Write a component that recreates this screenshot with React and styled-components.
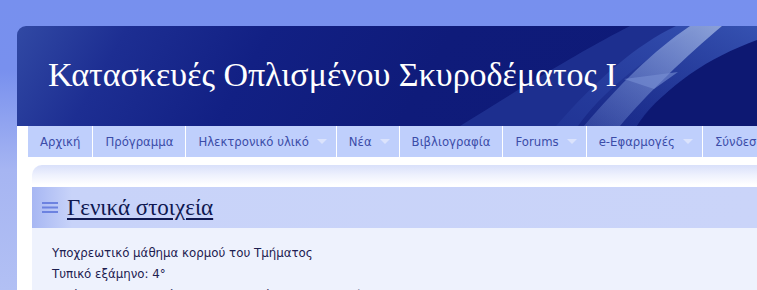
import React from 'react';
import styled, { createGlobalStyle } from 'styled-components';

const GlobalStyle = createGlobalStyle`
  html, body {
    margin: 0;
    padding: 0;
  }
  body {
    width: 757px;
    height: 290px;
    overflow: hidden;
    background: linear-gradient(180deg, #7790ee 0px, #7890ee 70px, #a6b5f2 170px, #b2c0f4 290px);
  }
`;

const Page = styled.div`
  margin: 26px 0 0 17px;
  width: 740px;
  height: 264px;
  overflow: hidden;
`;

const Header = styled.header`
  position: relative;
  height: 100px;
  border-radius: 9px 0 0 0;
  overflow: hidden;
  background: linear-gradient(120deg, #3149a4 0%, #1d2e92 14%, #122084 32%, #0f1b7a 55%, #0e1a76 100%);
`;

const Swoosh = styled.svg`
  position: absolute;
  inset: 0;
  width: 740px;
  height: 100px;
`;

const Title = styled.h1`
  position: relative;
  margin: 0;
  padding: 29px 0 0 31px;
  font-family: "Liberation Serif", "DejaVu Serif", serif;
  font-weight: normal;
  font-size: 34px;
  line-height: 40px;
  color: #ffffff;
  white-space: nowrap;
`;

const Body = styled.div`
  background: #ffffff;
  padding: 0 0 0 11px;
  box-shadow: -5px 0 3px -1px rgba(226, 232, 253, 0.8);
`;

const Nav = styled.nav`
  display: flex;
  height: 31px;
  background: #bfcffc;
  white-space: nowrap;
  overflow: hidden;
`;

const NavItem = styled.div`
  display: flex;
  align-items: center;
  flex: none;
  padding: 0 ${({ $drop }) => ($drop ? '9px' : '12px')} 0 12px;
  border-right: 1px solid #ffffff;
  font-family: "DejaVu Sans", Verdana, sans-serif;
  font-size: 11.7px;
  color: #3b4ca8;
`;

const Arrow = styled.span`
  margin-left: 8px;
  width: 0;
  height: 0;
  border-left: 5px solid transparent;
  border-right: 5px solid transparent;
  border-top: 5px solid #dbe3fc;
`;

const Block = styled.section`
  margin: 8px 0 0 4px;
  border-radius: 10px 0 0 0;
  background: linear-gradient(180deg, #d9e0fa 0px, #eef1fd 10px, #ffffff 20px);
  padding-top: 22px;
`;

const BlockHead = styled.div`
  display: flex;
  align-items: center;
  height: 41px;
  padding-left: 10px;
  background: linear-gradient(90deg, #a7b7f3 0px, #c8d3f9 40px, #cad4f9 100%);
`;

const Burger = styled.svg`
  width: 16px;
  height: 12px;
  margin-right: 9px;
  flex: none;
`;

const HeadTitle = styled.h2`
  margin: 0;
  font-family: "Liberation Serif", "DejaVu Serif", serif;
  font-weight: normal;
  font-size: 23px;
  color: #0f1850;
  text-decoration: underline;
  text-decoration-thickness: 1.5px;
  text-underline-offset: 3px;
`;

const BlockBody = styled.div`
  background: #eef2fd;
  padding: 15px 0 0 20px;
  height: 80px;
  font-family: "DejaVu Sans", Verdana, sans-serif;
  font-size: 11.8px;
  line-height: 21px;
  color: #1d2050;
`;

const Line = styled.div`
  white-space: nowrap;
`;

const menu = [
  { label: 'Αρχική' },
  { label: 'Πρόγραμμα' },
  { label: 'Ηλεκτρονικό υλικό', drop: true },
  { label: 'Νέα', drop: true },
  { label: 'Βιβλιογραφία' },
  { label: 'Forums', drop: true },
  { label: 'e-Εφαρμογές', drop: true },
  { label: 'Σύνδεση' },
];

const App = () => (
  <>
    <GlobalStyle />
    <Page>
      <Header>
        <Swoosh viewBox="17 26 740 100" preserveAspectRatio="none">
          <defs>
            <linearGradient id="soft" x1="0" y1="1" x2="1" y2="0">
              <stop offset="0" stopColor="#2a42a4" stopOpacity="0.3" />
              <stop offset="1" stopColor="#3a58b8" stopOpacity="0.9" />
            </linearGradient>
            <linearGradient id="bright" x1="0" y1="1" x2="1" y2="0">
              <stop offset="0" stopColor="#6c86d2" stopOpacity="0.3" />
              <stop offset="1" stopColor="#9cb0e0" stopOpacity="0.85" />
            </linearGradient>
          </defs>
          <path d="M460 126 C530 82 590 46 630 26 L700 26 C640 60 600 95 578 126 Z" fill="#2c44a6" opacity="0.5" />
          <path d="M556 126 C596 80 636 45 676 26 L757 26 L757 45 C700 65 655 95 637 126 Z" fill="url(#soft)" />
          <path d="M584 126 C618 86 654 50 690 26 L722 26 C686 56 646 95 620 126 Z" fill="url(#bright)" />
          <path d="M678 72 L624 79 L654 89 Z" fill="#7890d4" opacity="0.6" />
          <path d="M637 126 C668 84 708 58 757 40 L757 126 Z" fill="#0d1872" />
        </Swoosh>
        <Title>Κατασκευές Οπλισμένου Σκυροδέματος Ι</Title>
      </Header>
      <Body>
        <Nav>
          {menu.map((m) => (
            <NavItem key={m.label} $drop={m.drop}>
              {m.label}
              {m.drop && <Arrow />}
            </NavItem>
          ))}
        </Nav>
        <Block>
          <BlockHead>
            <Burger viewBox="0 0 16 12">
              <rect x="0" y="0" width="16" height="2" fill="#6c82e0" />
              <rect x="0" y="4.5" width="16" height="2" fill="#6c82e0" />
              <rect x="0" y="9" width="16" height="2" fill="#6c82e0" />
            </Burger>
            <HeadTitle>Γενικά στοιχεία</HeadTitle>
          </BlockHead>
          <BlockBody>
            <Line>Υποχρεωτικό μάθημα κορμού του Τμήματος</Line>
            <Line>Τυπικό εξάμηνο: 4°</Line>
            <Line>Διδάσκοντες: Ζ. Τσώνος, Μ. Καραγιάννης, Α. Φαρδής</Line>
          </BlockBody>
        </Block>
      </Body>
    </Page>
  </>
);

export default App;
